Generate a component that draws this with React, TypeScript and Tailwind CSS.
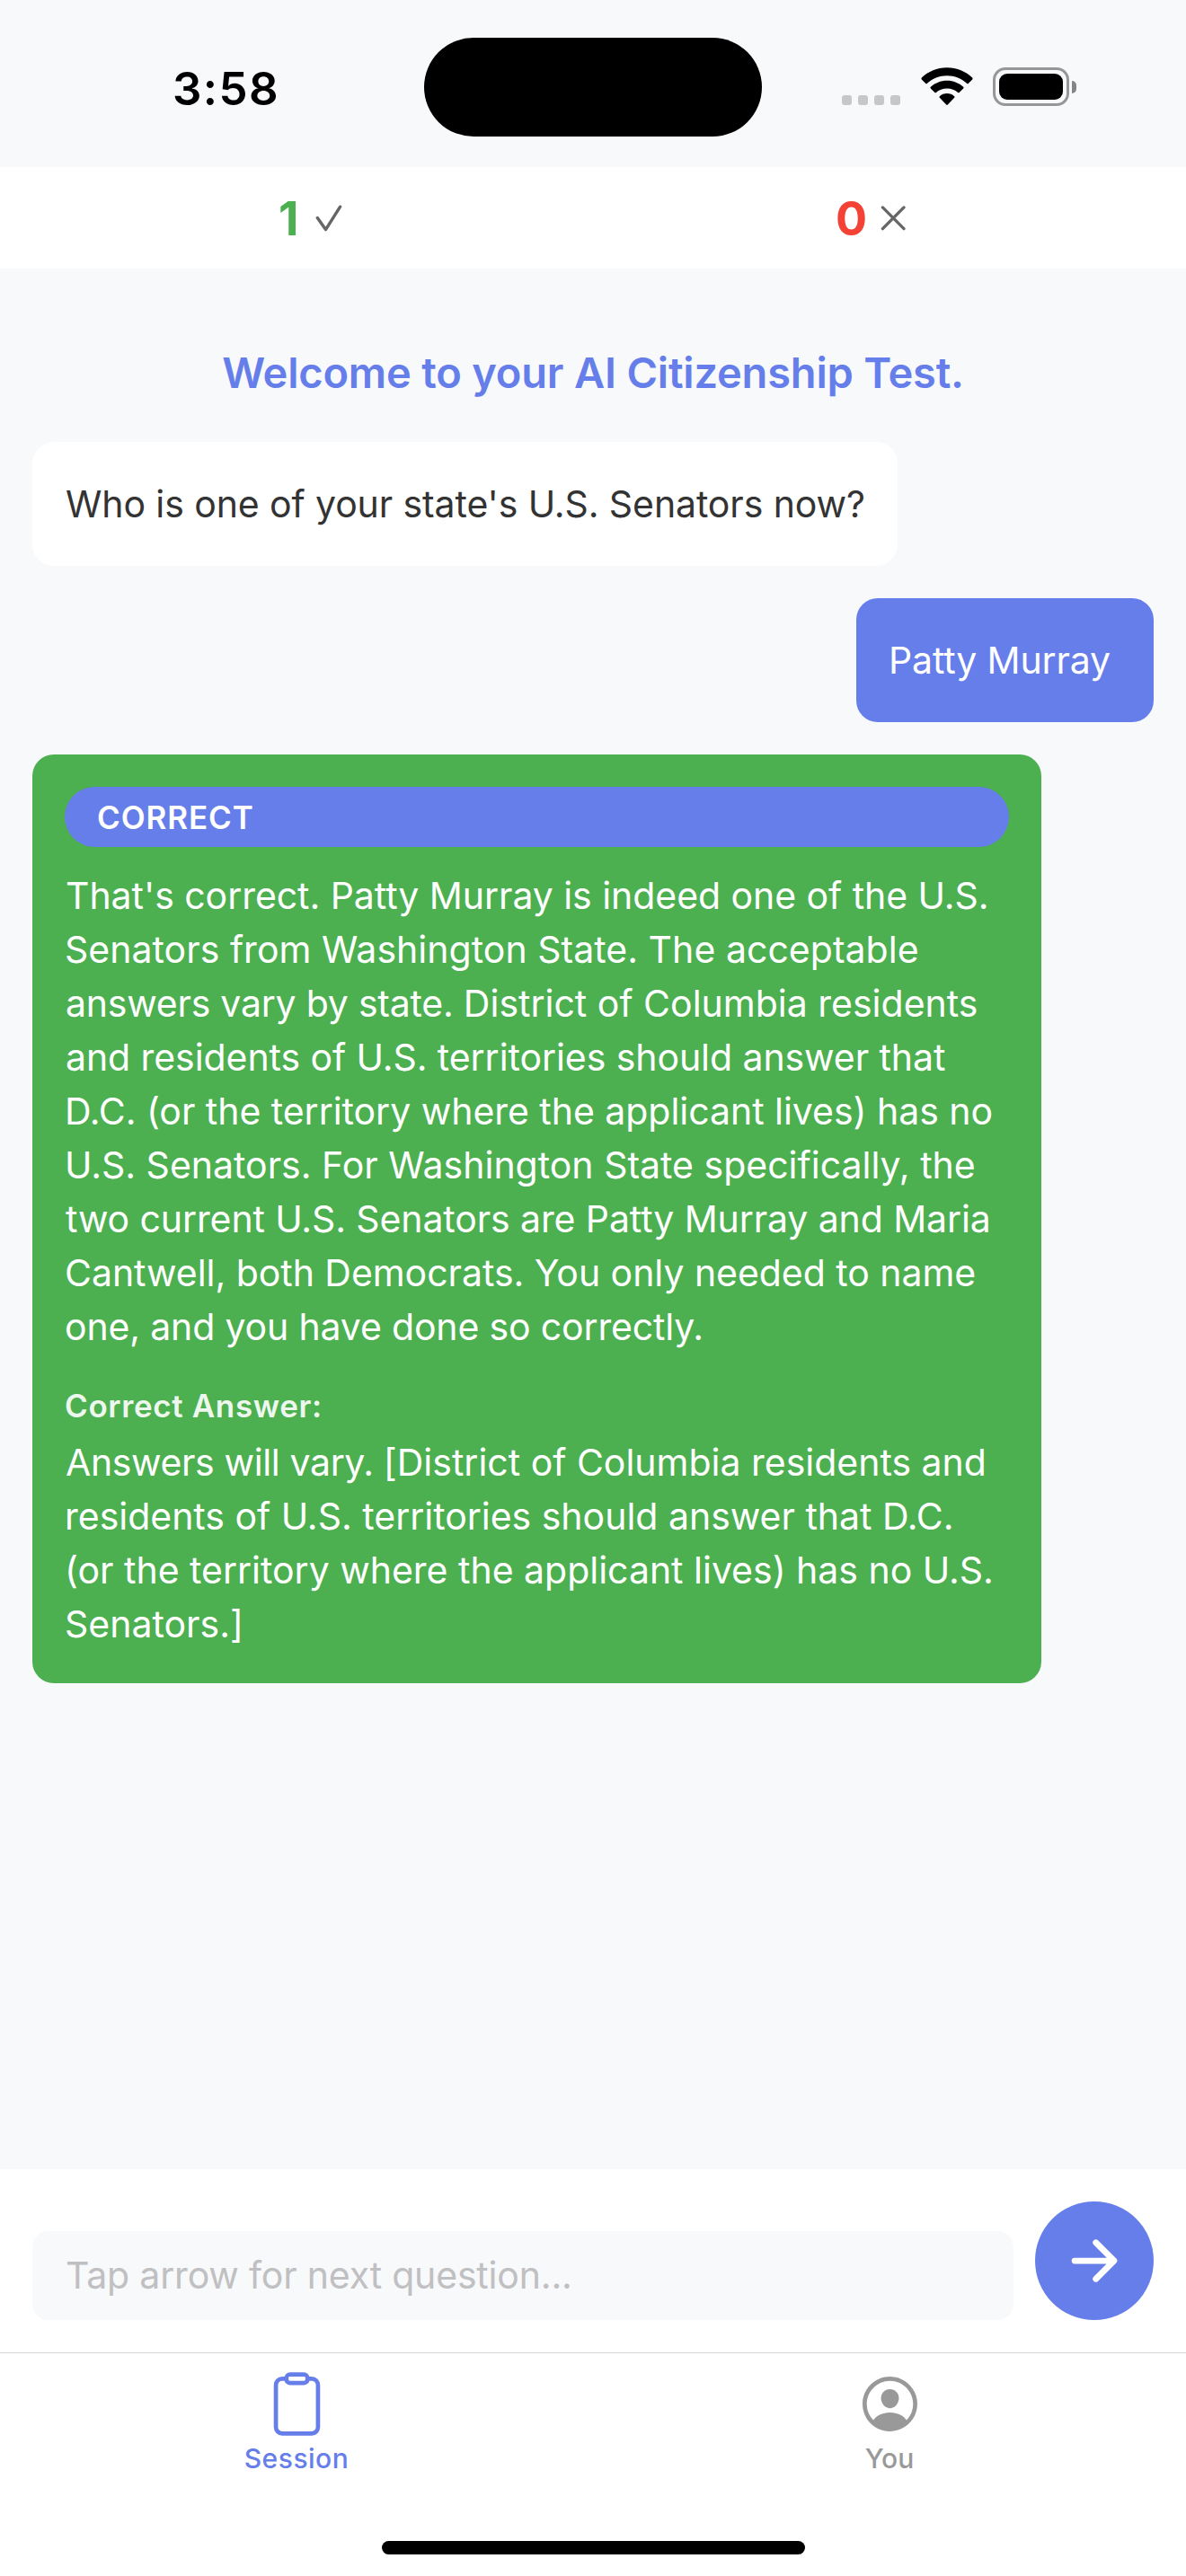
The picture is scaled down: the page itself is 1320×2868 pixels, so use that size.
import { IoArrowForward, IoClipboardOutline, IoPersonCircleOutline } from "react-icons/io5";

type Line = { text: string; cls: string; lead?: string; leadCls?: string };

const feedback: Line[] = [
  { text: "That's correct. Patty Murray is indeed one of the U.S.", cls: "pl-px tracking-[-0.051px]" },
  { text: "Senators from Washington State. The acceptable", cls: "tracking-[0.029px]" },
  { lead: "answers vary by state. ", leadCls: "tracking-[-0.23px]", text: "District of Columbia residents", cls: "pl-px" },
  { text: "and residents of U.S. territories should answer that", cls: "pl-px tracking-[-0.071px]" },
  { text: "D.C. (or the territory where the applicant lives) has no", cls: "tracking-[-0.035px]" },
  { text: "U.S. Senators. For Washington State specifically, the", cls: "tracking-[0.002px]" },
  { text: "two current U.S. Senators are Patty Murray and Maria", cls: "pl-px tracking-[-0.104px]" },
  { text: "Cantwell, both Democrats. You only needed to name", cls: "tracking-[-0.044px]" },
  { text: "one, and you have done so correctly.", cls: "tracking-[-0.16px]" },
];

const answer: Line[] = [
  { lead: "Answers will vary. ", leadCls: "tracking-[-0.37px]", text: "[District of Columbia residents and", cls: "pl-px tracking-[-0.01px]" },
  { text: "residents of U.S. territories should answer that D.C.", cls: "tracking-[-0.015px]" },
  { text: "(or the territory where the applicant lives) has no U.S.", cls: "tracking-[-0.011px]" },
  { text: "Senators.]", cls: "" },
];

function Lines({ lines }: { lines: Line[] }) {
  return (
    <div className="text-[41px] leading-[60px]">
      {lines.map((l) => (
        <div key={l.text} className={`whitespace-pre ${l.cls}`}>
          {l.lead && <span className={l.leadCls}>{l.lead}</span>}
          {l.text}
        </div>
      ))}
    </div>
  );
}

function StatusBar() {
  return (
    <div className="flex h-[186px] items-start">
      <div className="ml-[192px] mt-[69px] w-[280px] text-[51px] font-semibold leading-[60px] tracking-[1.4px] text-black">
        3:58
      </div>
      <div className="mt-[42px] h-[110px] w-[376px] rounded-full bg-black" />
      <div className="ml-[89px] mt-[106px] flex gap-[7px]">
        <span className="size-[11px] rounded-[3px] bg-[#c6c7c9]" />
        <span className="size-[11px] rounded-[3px] bg-[#c6c7c9]" />
        <span className="size-[11px] rounded-[3px] bg-[#c6c7c9]" />
        <span className="size-[11px] rounded-[3px] bg-[#c6c7c9]" />
      </div>
      <svg className="ml-[22px] mt-[74px] h-[44px] w-[60px]" viewBox="0 0 60 44" fill="black">
        <path d="M30 1.3C41 1.3 51 5.6 58.2 12.6Q59 13.5 58.2 14.4L53.7 18.9Q53 19.6 52.2 18.9C46.3 13.5 38.5 10.2 30 10.2S13.7 13.5 7.8 18.9Q7 19.6 6.3 18.9L1.800 14.400Q1 13.500 1.800 12.600C9 5.600 19 1.300 30 1.300Z" />
        <path d="M30 15.8C37 15.8 43.4 18.5 48.2 22.8Q49 23.6 48.2 24.4L43.6 29Q42.9 29.6 42.1 29C38.9 26.2 34.7 24.5 30 24.5S21.1 26.2 17.9 29Q17.1 29.6 16.400 29L11.800 24.400Q11 23.600 11.800 22.800C16.600 18.500 23 15.800 30 15.800Z" />
        <path d="M30 30C33.2 30 36 31.2 38.2 33.2Q39 34 38.2 34.8L30.8 42.5Q30 43.3 29.2 42.5L21.8 34.8Q21 34 21.8 33.2C24 31.2 26.8 30 30 30Z" />
      </svg>
      <div className="ml-[21px] mt-[75px] flex items-center">
        <div className="h-[43px] w-[85px] rounded-[14px] border-[3px] border-[#979799] p-1">
          <div className="h-[29px] w-[71px] rounded-[9px] bg-black" />
        </div>
        <div className="ml-[3px] h-[14px] w-[5px] rounded-r-full bg-[#858587]" />
      </div>
    </div>
  );
}

function ScoreBar() {
  return (
    <div className="flex h-[113px] items-center bg-white text-[52px] font-bold leading-[62px]">
      <div className="flex w-[620px] items-center pl-[310px]">
        <span className="pt-[2px] text-[#4caf50]">1</span>
        <svg className="ml-[19px] mt-px h-[32px] w-[32px]" viewBox="0 0 32 32" fill="none" stroke="#666" strokeWidth="3.4" strokeLinecap="round" strokeLinejoin="round">
          <path d="M2.3 15.6L11.5 28.6L27.6 3.2" />
        </svg>
      </div>
      <div className="flex items-center pl-[310px]">
        <span className="pt-[2px] text-[#f44336]">0</span>
        <svg className="ml-[14px] h-[30px] w-[30px]" viewBox="0 0 30 30" fill="none" stroke="#666" strokeWidth="3.3" strokeLinecap="round">
          <path d="M3.4 2.900L27 26.700M27 2.900L3.400 26.700" />
        </svg>
      </div>
    </div>
  );
}

function Chat() {
  return (
    <main className="flex flex-1 flex-col px-9 pt-[87px]">
      <h1 className="text-center text-[47px] font-semibold leading-[58px] tracking-[-0.194px] text-[#667eea]">
        Welcome to your AI Citizenship Test.
      </h1>
      <div className="mt-12 flex h-[138px] w-[963px] items-center rounded-[24px] bg-white pl-[37px] text-[41px] leading-[60px] tracking-[-0.1px] whitespace-nowrap text-[#333]">
        Who is one of your state's U.S. Senators now?
      </div>
      <div className="mt-9 flex h-[138px] w-[331px] items-center self-end rounded-[24px] bg-[#667eea] pl-9 text-[41px] leading-[60px] tracking-[-0.147px] whitespace-nowrap text-white">
        Patty Murray
      </div>
      <div className="mt-9 w-[1123px] rounded-[24px] bg-[#4caf50] p-9 text-white">
        <div className="flex h-[67px] items-center rounded-[36px] bg-[#667eea] pt-px pl-[36px] text-[35px] font-semibold tracking-[0.9px]">
          CORRECT
        </div>
        <div className="mt-6">
          <Lines lines={feedback} />
        </div>
        <div className="mt-[34px] mb-[9px] text-[35px] font-semibold leading-[48px] tracking-[0.63px] opacity-90">
          Correct Answer:
        </div>
        <Lines lines={answer} />
      </div>
    </main>
  );
}

function Composer() {
  return (
    <div className="flex h-[204px] items-end gap-6 bg-white px-9 pb-9">
      <div className="flex h-[99px] flex-1 items-center rounded-[18px] bg-[#f8f9fb] pl-[37px] text-[41px] tracking-[-0.187px] text-[#c0c0c2]">
        Tap arrow for next question...
      </div>
      <button className="flex size-[132px] items-center justify-center rounded-full bg-[#667eea] text-white">
        <IoArrowForward className="size-[72px]" />
      </button>
    </div>
  );
}

function TabBar() {
  return (
    <nav className="flex h-[249px] flex-col items-center border-t border-[#d8d8d8] bg-white">
      <div className="flex h-[209px] w-full pt-[19px] text-[30px] font-medium leading-[36px]">
        <div className="flex flex-1 flex-col items-center text-[#667eea]">
          <IoClipboardOutline className="size-[75px]" />
          <span className="mt-[5px] tracking-[0.5px]">Session</span>
        </div>
        <div className="flex flex-1 flex-col items-center text-[#999]">
          <IoPersonCircleOutline className="size-[75px]" />
          <span className="mt-[5px]">You</span>
        </div>
      </div>
      <div className="h-[15px] w-[471px] rounded-full bg-black" />
    </nav>
  );
}

export default function App() {
  return (
    <div className="flex h-[2868px] w-[1320px] flex-col overflow-hidden bg-[#f8f9fb] font-[Inter,sans-serif]">
      <StatusBar />
      <ScoreBar />
      <Chat />
      <Composer />
      <TabBar />
    </div>
  );
}
